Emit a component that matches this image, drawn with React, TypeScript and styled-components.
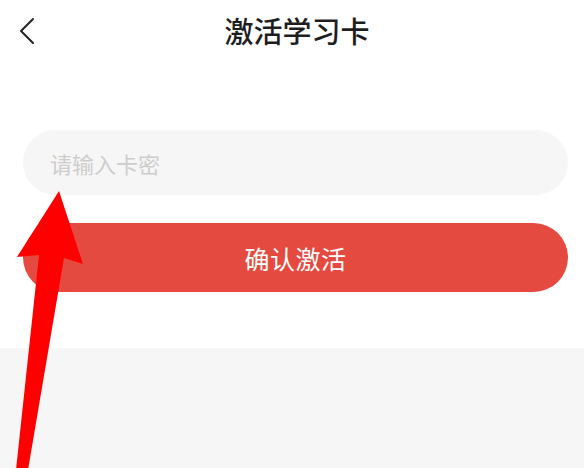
import React, { useState } from "react";
import styled, { createGlobalStyle } from "styled-components";

const GlobalStyle = createGlobalStyle`
  html, body {
    margin: 0;
    padding: 0;
    background: #f6f6f7;
    font-family: "Noto Sans CJK SC", "Noto Sans", sans-serif;
  }
`;

const Page = styled.div`
  position: relative;
  width: 584px;
  height: 468px;
  overflow: hidden;
  display: flex;
  flex-direction: column;
  background: #f6f6f7;
`;

const Top = styled.div`
  background: #ffffff;
  height: 348px;
  display: flex;
  flex-direction: column;
`;

const NavBar = styled.div`
  position: relative;
  height: 62px;
  display: flex;
  align-items: center;
  justify-content: center;
`;

const BackButton = styled.button`
  position: absolute;
  left: 13px;
  top: 13px;
  width: 28px;
  height: 36px;
  padding: 0;
  border: none;
  background: transparent;
  display: flex;
  align-items: center;
  justify-content: center;
`;

const Title = styled.h1`
  margin: 0 0 2px 10px;
  font-size: 29px;
  font-weight: 500;
  color: #1e1e1e;
`;

const Form = styled.div`
  display: flex;
  flex-direction: column;
  gap: 28px;
  padding: 68px 16px 0 23px;
`;

const CardInput = styled.input`
  height: 65px;
  border: none;
  outline: none;
  border-radius: 33px;
  background: #f6f6f6;
  padding: 0 27px;
  font-family: inherit;
  font-size: 22px;
  color: #333;

  &::placeholder {
    color: #cdcdcd;
  }
`;

const SubmitButton = styled.button`
  height: 69px;
  border: none;
  border-radius: 35px;
  background: #e54a40;
  color: #ffffff;
  font-family: inherit;
  font-size: 25px;
  letter-spacing: 0.5px;
`;

const Pointer = styled.svg`
  position: absolute;
  left: 0;
  top: 0;
  pointer-events: none;
`;

const App = (): JSX.Element => {
  const [code, setCode] = useState("");

  return (
    <>
      <GlobalStyle />
      <Page>
        <Top>
          <NavBar>
            <BackButton aria-label="返回">
              <svg width="18" height="28" viewBox="0 0 18 28">
                <polyline
                  points="15,2 3,14 15,26"
                  fill="none"
                  stroke="#222"
                  strokeWidth="2"
                  strokeLinecap="round"
                  strokeLinejoin="round"
                />
              </svg>
            </BackButton>
            <Title>激活学习卡</Title>
          </NavBar>
          <Form>
            <CardInput
              placeholder="请输入卡密"
              value={code}
              onChange={(e) => setCode(e.target.value)}
            />
            <SubmitButton>确认激活</SubmitButton>
          </Form>
        </Top>
        <Pointer width="584" height="468" viewBox="0 0 584 468">
          <polygon
            points="59,191 83,264 64,258 28,470 16,470 39,255 17,257"
            fill="#ff0000"
          />
        </Pointer>
      </Page>
    </>
  );
};

export default App;
